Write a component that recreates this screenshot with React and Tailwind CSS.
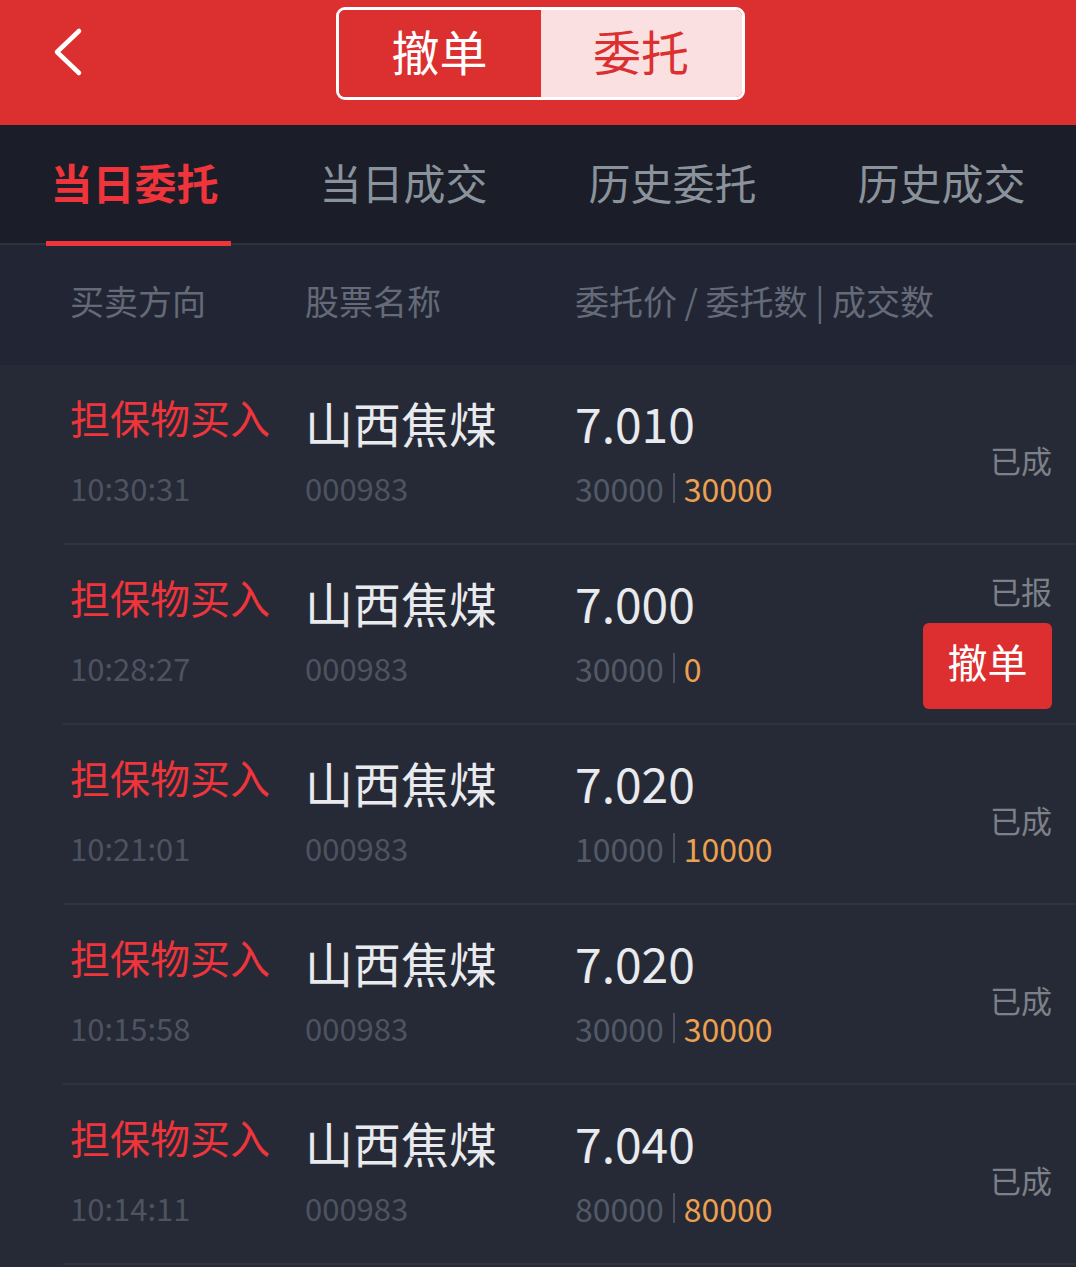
import React from 'react';

const rows = [
    { time: '10:30:31', price: '7.010', qty: '30000', done: '30000', status: '已成' },
    { time: '10:28:27', price: '7.000', qty: '30000', done: '0', status: '已报', cancel: true },
    { time: '10:21:01', price: '7.020', qty: '10000', done: '10000', status: '已成' },
    { time: '10:15:58', price: '7.020', qty: '30000', done: '30000', status: '已成' },
    { time: '10:14:11', price: '7.040', qty: '80000', done: '80000', status: '已成' },
];

const tabs = ['当日委托', '当日成交', '历史委托', '历史成交'];

const OrderRow = ({ row }) => (
    <div className="relative h-[180px] flex">
        {/* direction */}
        <div className="w-[305px] shrink-0 pl-[70px] flex flex-col">
            <div className="mt-[32px] h-[40px] leading-[40px] text-[40px] text-[#f0343b] whitespace-nowrap">担保物买入</div>
            <div className="mt-[36px] h-[30px] leading-[30px] text-[31px] text-[#4d5360]">{row.time}</div>
        </div>
        {/* name */}
        <div className="w-[270px] shrink-0 flex flex-col">
            <div className="mt-[33px] h-[48px] leading-[48px] text-[48px] text-[#e8eaee] whitespace-nowrap">山西焦煤</div>
            <div className="mt-[27px] h-[30px] leading-[30px] text-[31px] text-[#4d5360]">000983</div>
        </div>
        {/* price */}
        <div className="flex-1 flex flex-col">
            <div className="mt-[33px] h-[48px] leading-[48px] text-[48px] text-[#e8eaee]">{row.price}</div>
            <div className="mt-[27px] h-[30px] leading-[30px] text-[32px] flex items-center">
                <span className="text-[#535a67]">{row.qty}</span>
                <span className="mx-[9px] w-[2px] h-[30px] bg-[#4a505c]"></span>
                <span className="text-[#eba052]">{row.done}</span>
            </div>
        </div>
        {/* status */}
        <div className="w-[160px] shrink-0 pr-[24px] flex flex-col items-end">
            {row.cancel ? (
                <>
                    <div className="mt-[29px] h-[34px] leading-[34px] text-[31px] text-[#7c8089]">{row.status}</div>
                    <button className="mt-[15px] w-[129px] h-[86px] rounded-[6px] bg-[#dd2f30] text-white text-[40px] leading-none pb-[10px]">撤单</button>
                </>
            ) : (
                <div className="mt-[78px] h-[34px] leading-[34px] text-[31px] text-[#7c8089]">{row.status}</div>
            )}
        </div>
        <div className="absolute left-[63px] right-0 bottom-0 h-[2px] bg-[#2f333e]"></div>
    </div>
);

export default function App() {
    return (
        <div className="w-[1076px] min-h-[1267px] bg-[#262a36] overflow-hidden" style={{ fontFamily: '"Noto Sans CJK SC", "Noto Sans", sans-serif' }}>
            {/* Header */}
            <div className="relative h-[125px] bg-[#dc2f30] flex justify-center pt-[7px] pl-[4px]">
                <svg className="absolute left-[50px] top-[26px]" width="36" height="52" viewBox="0 0 36 52" fill="none">
                    <path d="M29 5 L7 26 L29 47" stroke="white" strokeWidth="4.5" strokeLinecap="round" strokeLinejoin="round" />
                </svg>
                <div className="w-[409px] h-[93px] rounded-[9px] border-[3px] border-white flex overflow-hidden">
                    <div className="w-[202px] bg-[#dc2f30] flex items-center justify-center text-white text-[48px] leading-none pb-[8px]">撤单</div>
                    <div className="flex-1 bg-[#fae0e1] flex items-center justify-center text-[#dc2f30] text-[48px] leading-none pb-[8px]">委托</div>
                </div>
            </div>

            {/* Tabs */}
            <div className="h-[120px] bg-[#1b1e28] flex border-b-2 border-[#2e323d]">
                {tabs.map((t, i) => (
                    <div key={t} className="relative w-[269px] flex items-center justify-center pb-[6px]">
                        <span className={i === 0 ? 'text-[42px] font-bold text-[#f0343b]' : 'text-[42px] text-[#8a929c]'}>{t}</span>
                        {i === 0 && <div className="absolute left-[46px] bottom-[-3px] w-[185px] h-[5px] bg-[#f0343b]"></div>}
                    </div>
                ))}
            </div>

            {/* Column header */}
            <div className="h-[120px] bg-[#222634] flex items-center text-[34px] text-[#646a77] pb-[10px]">
                <div className="w-[305px] shrink-0 pl-[70px]">买卖方向</div>
                <div className="w-[270px] shrink-0">股票名称</div>
                <div>委托价 / 委托数 | 成交数</div>
            </div>

            {/* Rows */}
            <div>
                {rows.map((r, i) => (
                    <OrderRow key={i} row={r} />
                ))}
            </div>
        </div>
    );
}
